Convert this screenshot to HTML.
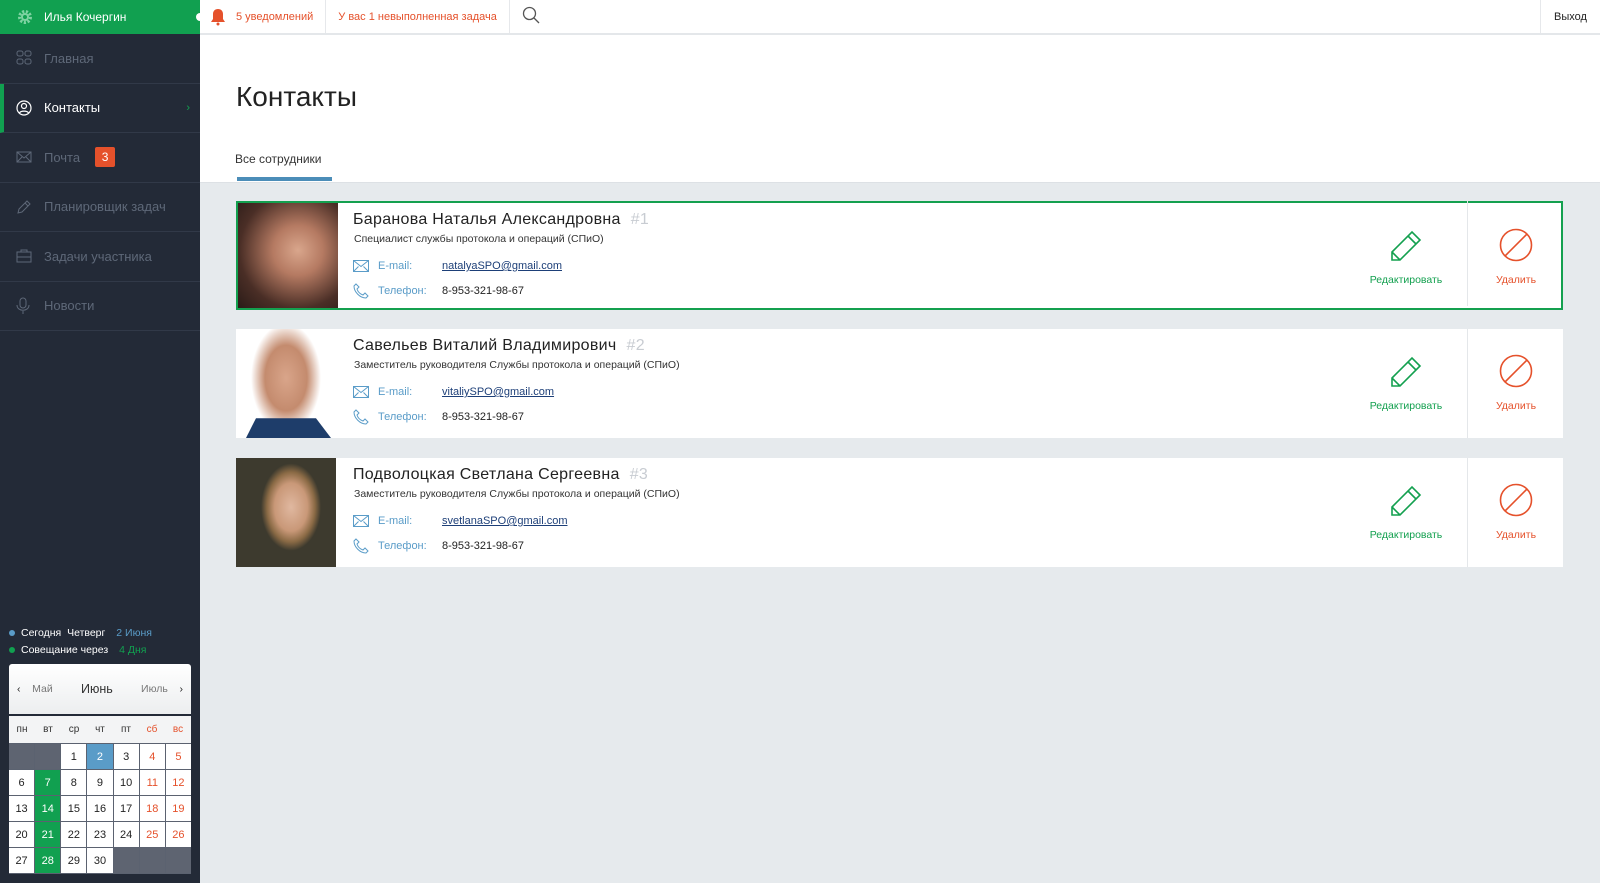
<!DOCTYPE html>
<html><head><meta charset="utf-8"><style>
*{box-sizing:border-box;margin:0;padding:0}
body{width:1600px;height:883px;overflow:hidden;font-family:"Liberation Sans","DejaVu Sans",sans-serif;background:#e6eaed;position:relative;font-size:12px}
.sb{position:absolute;left:0;top:0;width:200px;height:883px;background:#232a37}
.user{height:34px;background:#11a050;color:#fff;font-size:12px;display:flex;align-items:center;padding-left:44px;position:relative}
.mi{height:49.5px;border-bottom:1px solid #313948;display:flex;align-items:center;padding-left:44px;color:#5e6878;font-size:13px;position:relative}
.mi svg{position:absolute;left:16px;top:50%;transform:translateY(-50%)}
.mi.act{color:#fff;background:#232a37;border-left:4px solid #11a050;padding-left:40px}
.mi.act svg{left:12px}
.top{position:absolute;left:200px;top:0;right:0;height:35px;background:#fff;border-bottom:2px solid #e4e7ea;display:flex;align-items:center;font-size:11px;color:#e5512b}
.top .s{height:33px;border-right:1px solid #e6e8eb;display:flex;align-items:center;padding:0 12px}
.main{position:absolute;left:200px;top:35px;right:0;height:148px;background:#fff;border-bottom:1px solid #dde1e5}
h1{position:absolute;left:36px;top:46px;font-weight:normal;font-size:28px;color:#222}
.tab{position:absolute;left:35px;top:117px;font-size:12px;color:#333}
.tabl{position:absolute;left:37px;top:142px;width:95px;height:4px;background:#4b8db8}
.card{position:absolute;left:236px;width:1327px;height:109px;background:#fff}
.card.sel{border:2px solid #14a04f}
.card.sel>*{margin-left:-2px;margin-top:-2px}
.ph{position:absolute;left:0;top:0;width:100px;height:100%}
.nm{position:absolute;left:117px;top:8px;font-size:16px;color:#222;letter-spacing:.3px}
.nm span{color:#c8ccd2;margin-left:10px}
.pos{position:absolute;left:118px;top:30px;font-size:10.5px;color:#333}
.row{position:absolute;left:117px;font-size:11px;display:flex;align-items:center}
.row .l{color:#5a9cc8;width:89px;padding-left:25px}
.row a{color:#1d3f78;text-decoration:underline}
.row svg{position:absolute;left:0}
.div{position:absolute;left:1231px;top:0;width:1px;height:100%;background:#e4e7ea}
.act1{position:absolute;left:1120px;width:100px;text-align:center;top:25px;color:#13a04f;font-size:10.5px}
.act2{position:absolute;left:1230px;width:100px;text-align:center;top:25px;color:#e5512b;font-size:10.5px}
.act1 svg,.act2 svg{display:block;margin:0 auto 12px}
.cal{position:absolute;left:9px;top:664px;width:182px}
.ch{height:50px;background:linear-gradient(#fff,#eceeef);border-radius:3px 3px 0 0;display:flex;align-items:center;justify-content:space-between;padding:0 8px;font-size:10.5px;color:#777}
.wd{display:grid;grid-template-columns:repeat(7,1fr);background:#f3f4f5;height:27px;margin-top:2px;align-items:center;text-align:center;font-size:10px;color:#333}
.grid{display:grid;grid-template-columns:repeat(7,1fr);gap:1px;background:#5b6270;padding:1px 0}
.grid div{height:25px;background:#fff;display:flex;align-items:center;justify-content:center;font-size:11px;color:#222}
.grid .e{background:#5e6471}.grid .r{color:#e5512b}.grid .g{background:#11a050;color:#fff}.grid .b{background:#5a9cc8;color:#fff}
</style></head><body>
<div class="sb">
<div class="user"><svg style="position:absolute;left:17px;top:9px" width="16" height="16" viewBox="0 0 16 16"><circle cx="8" cy="8" r="5.5" fill="none" stroke="#7fd3a2" stroke-width="3" stroke-dasharray="2.2 1.6"/><circle cx="8" cy="8" r="4" fill="#7fd3a2"/><circle cx="8" cy="8" r="2" fill="#11a050"/></svg>Илья Кочергин<span style="position:absolute;right:-4px;top:13px;width:8px;height:8px;border-radius:4px;background:#fff"></span></div>
<div class="mi"><svg width="16" height="16" viewBox="0 0 16 16" fill="none" stroke="#5e6878"><rect x="1" y="1" width="6" height="5" rx="2"/><rect x="9" y="1" width="6" height="5" rx="2"/><rect x="1" y="9" width="6" height="5" rx="2"/><rect x="9" y="9" width="6" height="5" rx="2"/></svg>Главная</div>
<div class="mi act"><svg width="16" height="16" viewBox="0 0 16 16" fill="none" stroke="#fff" stroke-width="1.2"><circle cx="8" cy="8" r="7"/><circle cx="8" cy="6" r="2.5"/><path d="M3.5 13c1-2.5 8-2.5 9 0"/></svg>Контакты<span style="position:absolute;right:10px;color:#11a050;font-size:11px">›</span></div>
<div class="mi"><svg width="16" height="14" viewBox="0 0 16 14" fill="none" stroke="#5e6878"><rect x="1" y="2" width="14" height="10"/><path d="M1 2l7 6 7-6M1 12l5-5M15 12l-5-5"/></svg>Почта<span style="margin-left:15px;background:#e5512b;color:#fff;width:20px;height:20px;display:inline-flex;align-items:center;justify-content:center;font-size:12px;border-radius:2px">3</span></div>
<div class="mi"><svg width="16" height="16" viewBox="0 0 16 16" fill="none" stroke="#5e6878"><path d="M2 14l1-4 8-8 3 3-8 8z M9 4l3 3"/></svg>Планировщик задач</div>
<div class="mi"><svg width="16" height="14" viewBox="0 0 16 14" fill="none" stroke="#5e6878"><rect x="1" y="3" width="14" height="10"/><path d="M5 3V1h6v2M1 8h14"/></svg>Задачи участника</div>
<div class="mi"><svg width="14" height="18" viewBox="0 0 14 18" fill="none" stroke="#5e6878"><rect x="4" y="1" width="6" height="10" rx="3"/><path d="M1 8c0 7 12 7 12 0M7 14v3"/></svg>Новости</div>
<div style="position:absolute;left:9px;top:625px;color:#fff;font-size:10.5px;line-height:17px">
<div><span style="display:inline-block;width:6px;height:6px;border-radius:3px;background:#5a9cc8;margin-right:6px"></span>Сегодня&nbsp; Четверг <span style="color:#5a9cc8;margin-left:8px">2 Июня</span></div>
<div><span style="display:inline-block;width:6px;height:6px;border-radius:3px;background:#11a050;margin-right:6px"></span>Совещание через <span style="color:#11a050;margin-left:8px">4 Дня</span></div></div>
<div class="cal"><div class="ch"><span style="color:#222">‹&nbsp;&nbsp;&nbsp;&nbsp;<span style="color:#777">Май</span></span><span style="color:#333;font-size:12.5px">Июнь</span><span>Июль&nbsp;&nbsp;&nbsp;&nbsp;<span style="color:#222">›</span></span></div>
<div class="wd"><span>пн</span><span>вт</span><span>ср</span><span>чт</span><span>пт</span><span style="color:#e5512b">сб</span><span style="color:#e5512b">вс</span></div>
<div class="grid"><div class="e"></div><div class="e"></div><div>1</div><div class="b">2</div><div>3</div><div class="r">4</div><div class="r">5</div>
<div>6</div><div class="g">7</div><div>8</div><div>9</div><div>10</div><div class="r">11</div><div class="r">12</div>
<div>13</div><div class="g">14</div><div>15</div><div>16</div><div>17</div><div class="r">18</div><div class="r">19</div>
<div>20</div><div class="g">21</div><div>22</div><div>23</div><div>24</div><div class="r">25</div><div class="r">26</div>
<div>27</div><div class="g">28</div><div>29</div><div>30</div><div class="e"></div><div class="e"></div><div class="e"></div></div></div>
</div>
<div class="top"><div class="s" style="padding-left:10px"><svg width="16" height="18" viewBox="0 0 16 18" style="margin-right:10px"><path d="M8 1c-3 0-5 2-5 5v5l-2 3h14l-2-3V6c0-3-2-5-5-5z" fill="#e5512b"/><circle cx="8" cy="16" r="1.5" fill="#e5512b"/></svg>5 уведомлений</div><div class="s">У вас 1 невыполненная задача</div><div style="padding-left:12px"><svg width="18" height="18" viewBox="0 0 18 18" fill="none" stroke="#555" stroke-width="1.3"><circle cx="7.5" cy="7.5" r="6"/><path d="M12 12l5 5"/></svg></div>
<div style="position:absolute;right:0;top:0;height:33px;width:60px;border-left:1px solid #e6e8eb;display:flex;align-items:center;justify-content:center;color:#222;font-size:11px">Выход</div></div>
<div class="main"><h1>Контакты</h1><div class="tab">Все сотрудники</div><div class="tabl"></div></div>

<div class="card sel" style="top:201px"><div class="ph" style="left:2px;top:2px;background:radial-gradient(circle at 60% 45%,#d9a68c 0,#b57a62 30%,#4a2e26 70%,#2a1b17 100%)"></div>
<div class="nm" style="top:10px">Баранова Наталья Александровна<span>#1</span></div><div class="pos" style="top:32px">Специалист службы протокола и операций (СПиО)</div>
<div class="row" style="top:59px"><svg width="16" height="12" viewBox="0 0 16 12" fill="none" stroke="#5a9cc8"><rect x=".5" y=".5" width="15" height="11"/><path d="M.5 .5l7.5 6 7.5-6M.5 11.5l5-5M15.5 11.5l-5-5"/></svg><span class="l">E-mail:</span><a>natalyaSPO@gmail.com</a></div>
<div class="row" style="top:84px"><svg width="16" height="16" viewBox="0 0 16 16" fill="none" stroke="#5a9cc8"><path d="M3 1l3 3-2 2c1 3 3 5 6 6l2-2 3 3-2 2C7 15 1 9 1 3z"/></svg><span class="l">Телефон:</span><span style="color:#222">8-953-321-98-67</span></div>
<div class="act1" style="top:27px"><svg width="36" height="34" viewBox="0 0 36 34" fill="none" stroke="#13a04f" stroke-width="1.6"><path d="M4 24L24 4l8 8-20 20H4z M20 8l8 8 M4 24l8 8"/></svg>Редактировать</div><div class="div"></div>
<div class="act2" style="top:27px"><svg width="36" height="34" viewBox="0 0 36 34" fill="none" stroke="#e5512b" stroke-width="1.6"><circle cx="18" cy="17" r="15.5"/><path d="M7 28L29 6"/></svg>Удалить</div></div>

<div class="card" style="top:329px"><div class="ph" style="background:radial-gradient(ellipse 35% 50% at 50% 45%,#d9a58a 0,#c48b6e 60%,#fff 100%)"></div><div style="position:absolute;left:0;bottom:0;width:100px;height:22px;background:#1e3d6a;clip-path:polygon(10% 100%,20% 10%,80% 10%,95% 100%)"></div>
<div class="nm">Савельев Виталий Владимирович<span>#2</span></div><div class="pos">Заместитель руководителя Службы протокола и операций (СПиО)</div>
<div class="row" style="top:57px"><svg width="16" height="12" viewBox="0 0 16 12" fill="none" stroke="#5a9cc8"><rect x=".5" y=".5" width="15" height="11"/><path d="M.5 .5l7.5 6 7.5-6M.5 11.5l5-5M15.5 11.5l-5-5"/></svg><span class="l">E-mail:</span><a>vitaliySPO@gmail.com</a></div>
<div class="row" style="top:82px"><svg width="16" height="16" viewBox="0 0 16 16" fill="none" stroke="#5a9cc8"><path d="M3 1l3 3-2 2c1 3 3 5 6 6l2-2 3 3-2 2C7 15 1 9 1 3z"/></svg><span class="l">Телефон:</span><span style="color:#222">8-953-321-98-67</span></div>
<div class="act1"><svg width="36" height="34" viewBox="0 0 36 34" fill="none" stroke="#13a04f" stroke-width="1.6"><path d="M4 24L24 4l8 8-20 20H4z M20 8l8 8 M4 24l8 8"/></svg>Редактировать</div><div class="div"></div>
<div class="act2"><svg width="36" height="34" viewBox="0 0 36 34" fill="none" stroke="#e5512b" stroke-width="1.6"><circle cx="18" cy="17" r="15.5"/><path d="M7 28L29 6"/></svg>Удалить</div></div>

<div class="card" style="top:458px"><div class="ph" style="background:radial-gradient(ellipse 30% 40% at 55% 45%,#e0b8a0 0,#c99878 55%,#8a6a45 80%,#3d3a2e 100%)"></div>
<div class="nm">Подволоцкая Светлана Сергеевна<span>#3</span></div><div class="pos">Заместитель руководителя Службы протокола и операций (СПиО)</div>
<div class="row" style="top:57px"><svg width="16" height="12" viewBox="0 0 16 12" fill="none" stroke="#5a9cc8"><rect x=".5" y=".5" width="15" height="11"/><path d="M.5 .5l7.5 6 7.5-6M.5 11.5l5-5M15.5 11.5l-5-5"/></svg><span class="l">E-mail:</span><a>svetlanaSPO@gmail.com</a></div>
<div class="row" style="top:82px"><svg width="16" height="16" viewBox="0 0 16 16" fill="none" stroke="#5a9cc8"><path d="M3 1l3 3-2 2c1 3 3 5 6 6l2-2 3 3-2 2C7 15 1 9 1 3z"/></svg><span class="l">Телефон:</span><span style="color:#222">8-953-321-98-67</span></div>
<div class="act1"><svg width="36" height="34" viewBox="0 0 36 34" fill="none" stroke="#13a04f" stroke-width="1.6"><path d="M4 24L24 4l8 8-20 20H4z M20 8l8 8 M4 24l8 8"/></svg>Редактировать</div><div class="div"></div>
<div class="act2"><svg width="36" height="34" viewBox="0 0 36 34" fill="none" stroke="#e5512b" stroke-width="1.6"><circle cx="18" cy="17" r="15.5"/><path d="M7 28L29 6"/></svg>Удалить</div></div>
</body></html>
